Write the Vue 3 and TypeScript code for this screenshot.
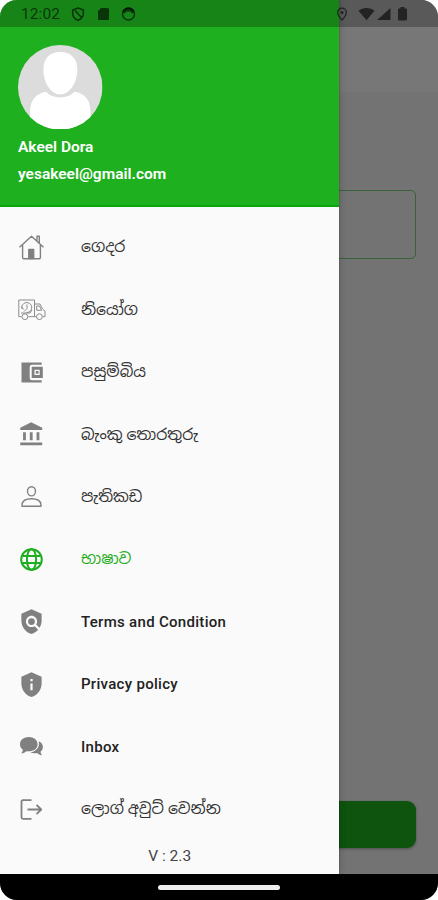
<script setup lang="ts">
interface MenuItem {
  id: string
  label: string
  latin?: boolean
  active?: boolean
}

const items: MenuItem[] = [
  { id: 'home', label: 'ගෙදර' },
  { id: 'orders', label: 'නියෝග' },
  { id: 'wallet', label: 'පසුම්බිය' },
  { id: 'bank', label: 'බැංකු තොරතුරු' },
  { id: 'profile', label: 'පැතිකඩ' },
  { id: 'language', label: 'භාෂාව', active: true },
  { id: 'terms', label: 'Terms and Condition', latin: true },
  { id: 'privacy', label: 'Privacy policy', latin: true },
  { id: 'inbox', label: 'Inbox', latin: true },
  { id: 'logout', label: 'ලොග් අවුට් වෙන්න' },
]
</script>

<template>
  <div class="phone">
    <main class="screen">
      <div class="app-bar"></div>
      <div class="content">
        <div class="field"></div>
        <button class="submit" aria-label="Submit"></button>
      </div>
    </main>

    <aside class="drawer">
      <header class="account">
        <svg class="avatar" viewBox="0 0 84 84">
          <defs><clipPath id="face"><circle cx="42" cy="42" r="42" /></clipPath></defs>
          <g clip-path="url(#face)">
            <rect width="84" height="84" fill="#dcdcdc" />
            <path fill="#fff" d="M42 7C31 7 25 14 25.300 25C25.600 38 33 49 42 49S58.600 38 59 25C59.300 14 53 7 42 7Z" />
            <path fill="#fff" d="M28 46.500C34 54 50 54 56 46.500C67 48 72 55 72 66V84H12V66C12 55 18 48 28 46.500Z" />
          </g>
        </svg>
        <strong class="name">Akeel Dora</strong>
        <strong class="email">yesakeel@gmail.com</strong>
      </header>

      <nav class="menu">
        <a v-for="item in items" :key="item.id" class="item" :class="{ active: item.active }">
          <svg v-if="item.id === 'home'" class="icon line" viewBox="0 0 27 27">
            <path d="M1.500 13.300 13.500 2.200 25.500 13.300M4.600 11V23.500Q4.600 24.700 5.800 24.700H21.200Q22.400 24.700 22.400 23.500V11M19 6.800V2.200H21.300V9" />
            <path d="M10.800 24.500V15.500H15.700V24.500Z" fill="currentColor" />
          </svg>
          <svg v-else-if="item.id === 'orders'" class="icon line thin" viewBox="0 0 27 27">
            <path d="M3.500 20.700H.8V4H16.500V20.700H10.200M16.500 8H22L24.500 13L27 15.300V20.700H24.600M18.200 20.700H16.500M18.700 10V14.300H23.600L21.500 10Z" />
            <circle cx="6.900" cy="20.700" r="2.900" /><circle cx="21.400" cy="20.700" r="2.900" />
            <path d="M4 13A5 5 0 1 1 8.500 16.500M3.500 10.500 5.500 13.500M9 8.500V12.500L6 15.500M3 17H12L14 14" />
          </svg>
          <svg v-else-if="item.id === 'wallet'" class="icon" viewBox="0 0 27 27">
            <path d="M3.500 3.500H23.700V5.700H14Q11.700 5.700 11.700 8V19Q11.700 21.200 14 21.200H23.700V23.500H3.500Z" />
            <path fill-rule="evenodd" d="M13.700 7.800H24.800V19H13.700ZM16.500 10.800V16H21.700V10.800Z" />
            <rect x="17.800" y="12" width="2.700" height="2.700" />
          </svg>
          <svg v-else-if="item.id === 'bank'" class="icon" viewBox="0 0 24 24">
            <path d="M4.500 10v7h2.500v-7zm6 0v7h2.500v-7zM2 21.500h19.500v-2.500H2zm14.500-11.500v7H19v-7zM11.750 1 2 6v2h19.500V6z" />
          </svg>
          <svg v-else-if="item.id === 'profile'" class="icon line" viewBox="0 0 27 27">
            <ellipse cx="13.500" cy="8.300" rx="4" ry="4.600" />
            <path d="M4 23.300V21.500C4.500 17.500 8 15.700 13.500 15.700S22.500 17.500 23 21.500V23.300Z" />
          </svg>
          <svg v-else-if="item.id === 'language'" class="icon line globe" viewBox="0 0 27 27">
            <circle cx="13.500" cy="13.500" r="10.300" /><ellipse cx="13.500" cy="13.500" rx="4.600" ry="10.300" />
            <path d="M4.600 9.900H22.400M4.600 17.100H22.400" />
          </svg>
          <svg v-else-if="item.id === 'terms'" class="icon" viewBox="0 0 24 24">
            <path d="M21 5l-9-4-9 4v6c0 5.550 3.840 10.740 9 12 2.300-.56 4.330-1.900 5.880-3.710l-3.120-3.120c-1.940 1.290-4.580 1.070-6.290-.64-1.950-1.950-1.950-5.120 0-7.070 1.950-1.950 5.120-1.950 7.070 0 1.710 1.710 1.920 4.350.64 6.290l2.900 2.900C20.290 15.690 21 13.380 21 11V5z" />
            <circle cx="12" cy="12" r="3" />
          </svg>
          <svg v-else-if="item.id === 'privacy'" class="icon" viewBox="0 0 24 24">
            <path d="M12 1 3 5v6c0 5.550 3.840 10.740 9 12 5.160-1.260 9-6.450 9-12V5l-9-4zm-1 6h2v2h-2V7zm0 4h2v6h-2v-6z" />
          </svg>
          <svg v-else-if="item.id === 'inbox'" class="icon" viewBox="0 0 27 27">
            <path d="M10.800 4C5.700 4 2 7.100 2 11.200C2 13.500 3.100 15.400 4.900 16.800C4.700 18.200 4 19.300 3.200 20.300C5.300 20.200 7 19.500 8.500 18.200C14.800 19 19.600 16 19.600 11.200C19.600 7.100 15.800 4 10.800 4Z" />
            <path d="M20.700 8.300C23.300 9.400 24.900 11.500 24.900 14C24.900 16 24 17.600 22.500 18.700C22.700 20.200 23.300 21.300 24.200 22.300C21.900 22.100 20.300 21.400 19 20.100C16.500 20.500 14.200 20.300 12.200 19.500C18 18.600 22.200 14.200 20.700 8.300Z" />
          </svg>
          <svg v-else class="icon line exit" viewBox="0 0 27 27">
            <path d="M13.500 4.200H5Q3.500 4.200 3.500 5.700V21.300Q3.500 22.800 5 22.800H13.500M9.500 13.500H23M18.500 8.800 23.200 13.500 18.500 18.200" />
          </svg>
          <span class="label" :class="{ latin: item.latin }">{{ item.label }}</span>
        </a>
      </nav>
      <footer class="version">V : 2.3</footer>
    </aside>

    <div class="status">
      <span class="clock">12:02</span>
      <svg class="left-icons" viewBox="0 0 66 16">
        <path d="M7 2 12.300 4V7.500C12.300 10.700 10 13.100 7 14.200C4 13.100 1.700 10.700 1.700 7.500V4ZM4 4.500 11 12" fill="none" stroke="currentColor" stroke-width="1.600" />
        <path d="M30 2H36.500Q38 2 38 3.500V13Q38 14 37 14H28Q27 14 27 13V5Z" />
        <circle cx="57.500" cy="8" r="6" fill="none" stroke="currentColor" stroke-width="1.400" />
        <path d="M51.500 6C52 0 63 0 63.500 6L61.500 7.500 59 5.500H55.500L53.500 7.500Z" />
      </svg>
      <svg class="right-icons" viewBox="0 0 72 16">
        <path d="M6 2.200A4.300 4.300 0 0 0 1.700 6.500C1.700 9.500 6 14 6 14S10.300 9.500 10.300 6.500A4.300 4.300 0 0 0 6 2.200Z" fill="none" stroke="currentColor" stroke-width="1.300" />
        <circle cx="6" cy="6.500" r="1.500" />
        <path d="M22.500 4.700C27 1.100 34 1.100 38.500 4.700L30.500 14.300ZM54.500 2V14H41ZM64.500 1H68.500V2.500H70Q71 2.500 71 3.500V13.500Q71 14.500 70 14.500H63Q62 14.500 62 13.500V3.500Q62 2.500 63 2.500H64.500Z" />
      </svg>
    </div>

    <div class="nav-bar"><span class="handle"></span></div>
  </div>
</template>

<style>
body {
  background: #fff;
}
</style>

<style scoped>
.phone {
  position: relative;
  display: flex;
  flex-direction: column;
  width: 438px;
  height: 900px;
  overflow: hidden;
  border-radius: 17px;
  background: #737373;
  font-family: Roboto, "Noto Sans Sinhala", "Noto Sans", sans-serif;
}
.screen {
  flex: 1;
  display: flex;
  flex-direction: column;
}
.app-bar {
  height: 92px;
  background: #777;
}
.content {
  flex: 1;
  display: flex;
  flex-direction: column;
  justify-content: space-between;
  padding: 98px 22px 26px;
}
.field {
  box-sizing: border-box;
  height: 69px;
  border: 1px solid #39633a;
  border-radius: 5px;
}
.submit {
  height: 47px;
  padding: 0;
  border: 0;
  border-radius: 9px;
  background: #0e530e;
  box-shadow: 0 1px 3px #0005;
}
.drawer {
  position: absolute;
  top: 0;
  left: 0;
  display: flex;
  flex-direction: column;
  width: 339.400px;
  height: 874px;
  background: #fafafa;
  box-shadow: 0 0 8px #0003, 0 0 2px #0004;
}
.account {
  box-sizing: border-box;
  display: flex;
  flex-direction: column;
  height: 206.500px;
  padding: 44.500px 18px 0;
  border-bottom: 2px solid #08a50c;
  background: #1fb01f;
  color: #fff;
  font-size: 15.500px;
}
.avatar {
  width: 84.500px;
  height: 84.500px;
}
.name {
  margin-top: 7px;
  line-height: 22px;
  font-weight: 600;
}
.email {
  margin-top: 5px;
  line-height: 22px;
  font-weight: 600;
}
.menu {
  display: flex;
  flex-direction: column;
  padding-top: 9.500px;
}
.item {
  display: flex;
  align-items: center;
  gap: 36px;
  height: 62.450px;
  padding-left: 18px;
  color: #808080;
}
.icon {
  flex: none;
  width: 27px;
  height: 27px;
  fill: currentColor;
  overflow: visible;
}
.line {
  fill: none;
  stroke: currentColor;
  stroke-width: 1.400;
  stroke-linejoin: round;
}
.thin {
  stroke-width: 0.900;
}
.globe {
  stroke-width: 2;
}
.exit {
  stroke-width: 1.800;
}
.label {
  color: #333;
  font-size: 15.700px;
  line-height: 24px;
  white-space: nowrap;
}
.label.latin {
  font-size: 15px;
  font-weight: 500;
  color: #222;
  letter-spacing: 0.300px;
}
.active,
.active .label {
  color: #1fad22;
}
.version {
  padding-top: 1px;
  line-height: 30px;
  text-align: center;
  font-size: 15.500px;
  color: #444;
}
.status {
  position: absolute;
  top: 0;
  left: 0;
  box-sizing: border-box;
  display: flex;
  align-items: center;
  width: 100%;
  height: 26.500px;
  padding: 2px 30px 0 21px;
  background: #00000040;
  color: #0009;
}
.clock {
  width: 50px;
  font-size: 15.500px;
  letter-spacing: 0.100px;
}
.left-icons {
  width: 66px;
  height: 16px;
  fill: currentColor;
}
.right-icons {
  width: 72px;
  height: 16px;
  margin-left: auto;
  fill: currentColor;
}
.nav-bar {
  display: flex;
  justify-content: center;
  align-items: center;
  height: 26px;
  background: #000;
}
.handle {
  width: 122px;
  height: 5px;
  border-radius: 3px;
  background: #eee;
}
</style>
